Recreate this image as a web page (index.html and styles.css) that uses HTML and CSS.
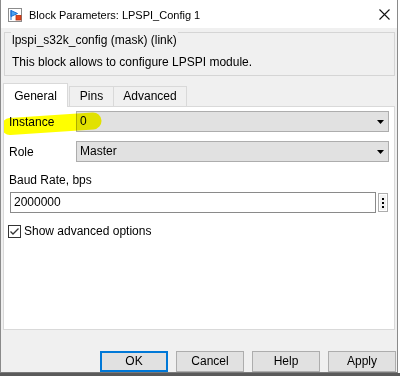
FILE: index.html
```html
<!DOCTYPE html>
<html>
<head>
<meta charset="utf-8">
<link rel="stylesheet" href="styles.css">
</head>
<body>
<div class="window">
  <div class="titlebar">
    <svg class="app-icon" width="14" height="14" viewBox="0 0 14 14">
      <rect x="0.5" y="0.5" width="13" height="13" fill="#fff" stroke="#8c8c8c"/>
      <path d="M3 2.5 L9.5 5.5 L3 8.5 Z" fill="#4aa3f0" stroke="#1d6fd0" stroke-width="1"/>
      <line x1="3" y1="2" x2="3" y2="12" stroke="#1d6fd0" stroke-width="1"/>
      <rect x="8" y="7.5" width="5" height="4.5" fill="#e2461e" stroke="#b5300f" stroke-width="0.8"/>
    </svg>
    <span class="title">Block Parameters: LPSPI_Config 1</span>
    <svg class="close" width="11" height="11" viewBox="0 0 11 11">
      <path d="M0.5 0.5 L10.5 10.5 M10.5 0.5 L0.5 10.5" stroke="#111" stroke-width="1.1" fill="none"/>
    </svg>
  </div>

  <div class="group">
    <div class="group-title">lpspi_s32k_config (mask) (link)</div>
    <div class="group-desc">This block allows to configure LPSPI module.</div>
  </div>

  <div class="tabs">
    <div class="tab tab-active tab-general">General</div>
    <div class="tab tab-pins">Pins</div>
    <div class="tab tab-adv">Advanced</div>
  </div>

  <div class="panel">
    <svg class="highlight" width="110" height="36" viewBox="0 0 110 36">
      <path d="M6 19.5 L89 14" stroke="#ffff00" stroke-width="17" stroke-linecap="round" fill="none"/>
    </svg>
    <div class="row">
      <span class="label">Instance</span>
      <div class="combo"><span class="combo-text">0</span>
        <svg class="arrow" width="7" height="4" viewBox="0 0 7 4"><polygon points="0,0 7,0 3.5,4" fill="#000"/></svg>
      </div>
    </div>
    <div class="row row-second">
      <span class="label">Role</span>
      <div class="combo"><span class="combo-text">Master</span>
        <svg class="arrow" width="7" height="4" viewBox="0 0 7 4"><polygon points="0,0 7,0 3.5,4" fill="#000"/></svg>
      </div>
    </div>
    <div class="field-label">Baud Rate, bps</div>
    <div class="edit-row">
      <div class="edit">2000000</div>
      <div class="dots"><span></span><span></span><span></span></div>
    </div>
    <div class="check-row">
      <svg class="checkbox" width="13" height="13" viewBox="0 0 13 13">
        <rect x="0.5" y="0.5" width="12" height="12" fill="#fff" stroke="#333"/>
        <path d="M2.5 6.5 L5 9 L10.5 3.5" stroke="#333" stroke-width="1.3" fill="none"/>
      </svg>
      <span>Show advanced options</span>
    </div>
  </div>

  <div class="buttons">
    <div class="btn btn-default">OK</div>
    <div class="btn">Cancel</div>
    <div class="btn">Help</div>
    <div class="btn">Apply</div>
  </div>
</div>
<div class="desk-strip"></div>
</body>
</html>
```

FILE: styles.css
```css
html, body {
  margin: 0;
  padding: 0;
}
body {
  width: 400px;
  height: 376px;
  overflow: hidden;
  background: #ffffff;
  font-family: "Liberation Sans", Arial, sans-serif;
  font-size: 12px;
  color: #000;
}
.window {
  width: 398px;
  height: 373px;
  box-sizing: border-box;
  background: #f0f0f0;
  border-left: 1px solid #8a8a8a;
  border-right: 1px solid #8a8a8a;
  border-bottom: 1px solid #7a7a7a;
  display: flex;
  flex-direction: column;
}
.desk-strip {
  height: 3px;
  background: #5a5a5a;
}
.titlebar {
  height: 28px;
  background: #fff;
  display: flex;
  align-items: center;
  padding-left: 7px;
  padding-right: 7px;
}
.app-icon {
  display: block;
  flex: none;
  margin-top: 2px;
}
.title {
  margin-left: 7px;
  font-size: 11px;
  line-height: 16px;
  margin-top: 1px;
}
.close {
  display: block;
  margin-left: auto;
  margin-top: 1px;
}
.group {
  margin: 4px 2px 0 3px;
  border: 1px solid #d5d5d5;
  padding: 0 7px 5px 7px;
}
.group-title {
  width: fit-content;
  margin-top: -1px;
  margin-left: -1px;
  padding: 0 1px;
  background: #f0f0f0;
  line-height: 16px;
}
.group-desc {
  margin-top: 6px;
  line-height: 16px;
}
.tabs {
  margin: 7px 0 0 2px;
  height: 23px;
  display: flex;
  align-items: flex-end;
}
.tab {
  box-sizing: border-box;
  height: 20px;
  line-height: 19px;
  text-align: center;
  border: 1px solid #d9d9d9;
  border-bottom: none;
  background: #f0f0f0;
}
.tab-active {
  height: 24px;
  line-height: 24px;
  margin-bottom: -1px;
  background: #fff;
  position: relative;
  z-index: 1;
}
.tab-general { width: 65px; margin-right: 1px; }
.tab-pins { width: 44px; border-right: none; }
.tab-adv { width: 74px; }
.panel {
  position: relative;
  margin: 0 2px 0 2px;
  height: 224px;
  box-sizing: border-box;
  background: #fff;
  border: 1px solid #d9d9d9;
  padding: 4px 5px 0 5px;
}
.highlight {
  position: absolute;
  left: 0;
  top: 0;
  mix-blend-mode: multiply;
  z-index: 2;
  pointer-events: none;
}
.row {
  display: flex;
  align-items: center;
  height: 21px;
}
.row-second {
  margin-top: 9px;
}
.label {
  width: 67px;
  flex: none;
  line-height: 16px;
}
.combo {
  flex: 1;
  height: 21px;
  box-sizing: border-box;
  background: #e1e1e1;
  border: 1px solid #adadad;
  display: flex;
  align-items: center;
  padding: 0 4px 0 3px;
}
.combo-text {
  line-height: 19px;
}
.arrow {
  display: block;
  margin-left: auto;
}
.field-label {
  margin-top: 10px;
  line-height: 16px;
}
.edit-row {
  margin-top: 4px;
  display: flex;
  align-items: center;
  gap: 2px;
  padding-left: 1px;
  padding-right: 1px;
}
.edit {
  flex: 1;
  height: 21px;
  box-sizing: border-box;
  border: 1px solid #8a8a8a;
  background: #fff;
  line-height: 19px;
  padding-left: 3px;
}
.dots {
  width: 10px;
  height: 19px;
  box-sizing: border-box;
  border: 1px solid #adadad;
  background: #f2f2f2;
  box-shadow: inset 0 0 0 1px #fff;
  display: flex;
  flex-direction: column;
  align-items: center;
  justify-content: center;
  gap: 2px;
}
.dots span {
  width: 2px;
  height: 2px;
  background: #000;
}
.check-row {
  margin-top: 10px;
  margin-left: -1px;
  display: flex;
  align-items: center;
  gap: 3px;
  line-height: 16px;
}
.checkbox {
  display: block;
}
.buttons {
  margin-top: 21px;
  display: flex;
  justify-content: flex-end;
  gap: 8px;
  padding-right: 1px;
}
.btn {
  width: 68px;
  height: 21px;
  box-sizing: border-box;
  background: #e1e1e1;
  border: 1px solid #adadad;
  text-align: center;
  line-height: 19px;
}
.btn-default {
  border: 2px solid #0078d7;
  line-height: 17px;
}
```
